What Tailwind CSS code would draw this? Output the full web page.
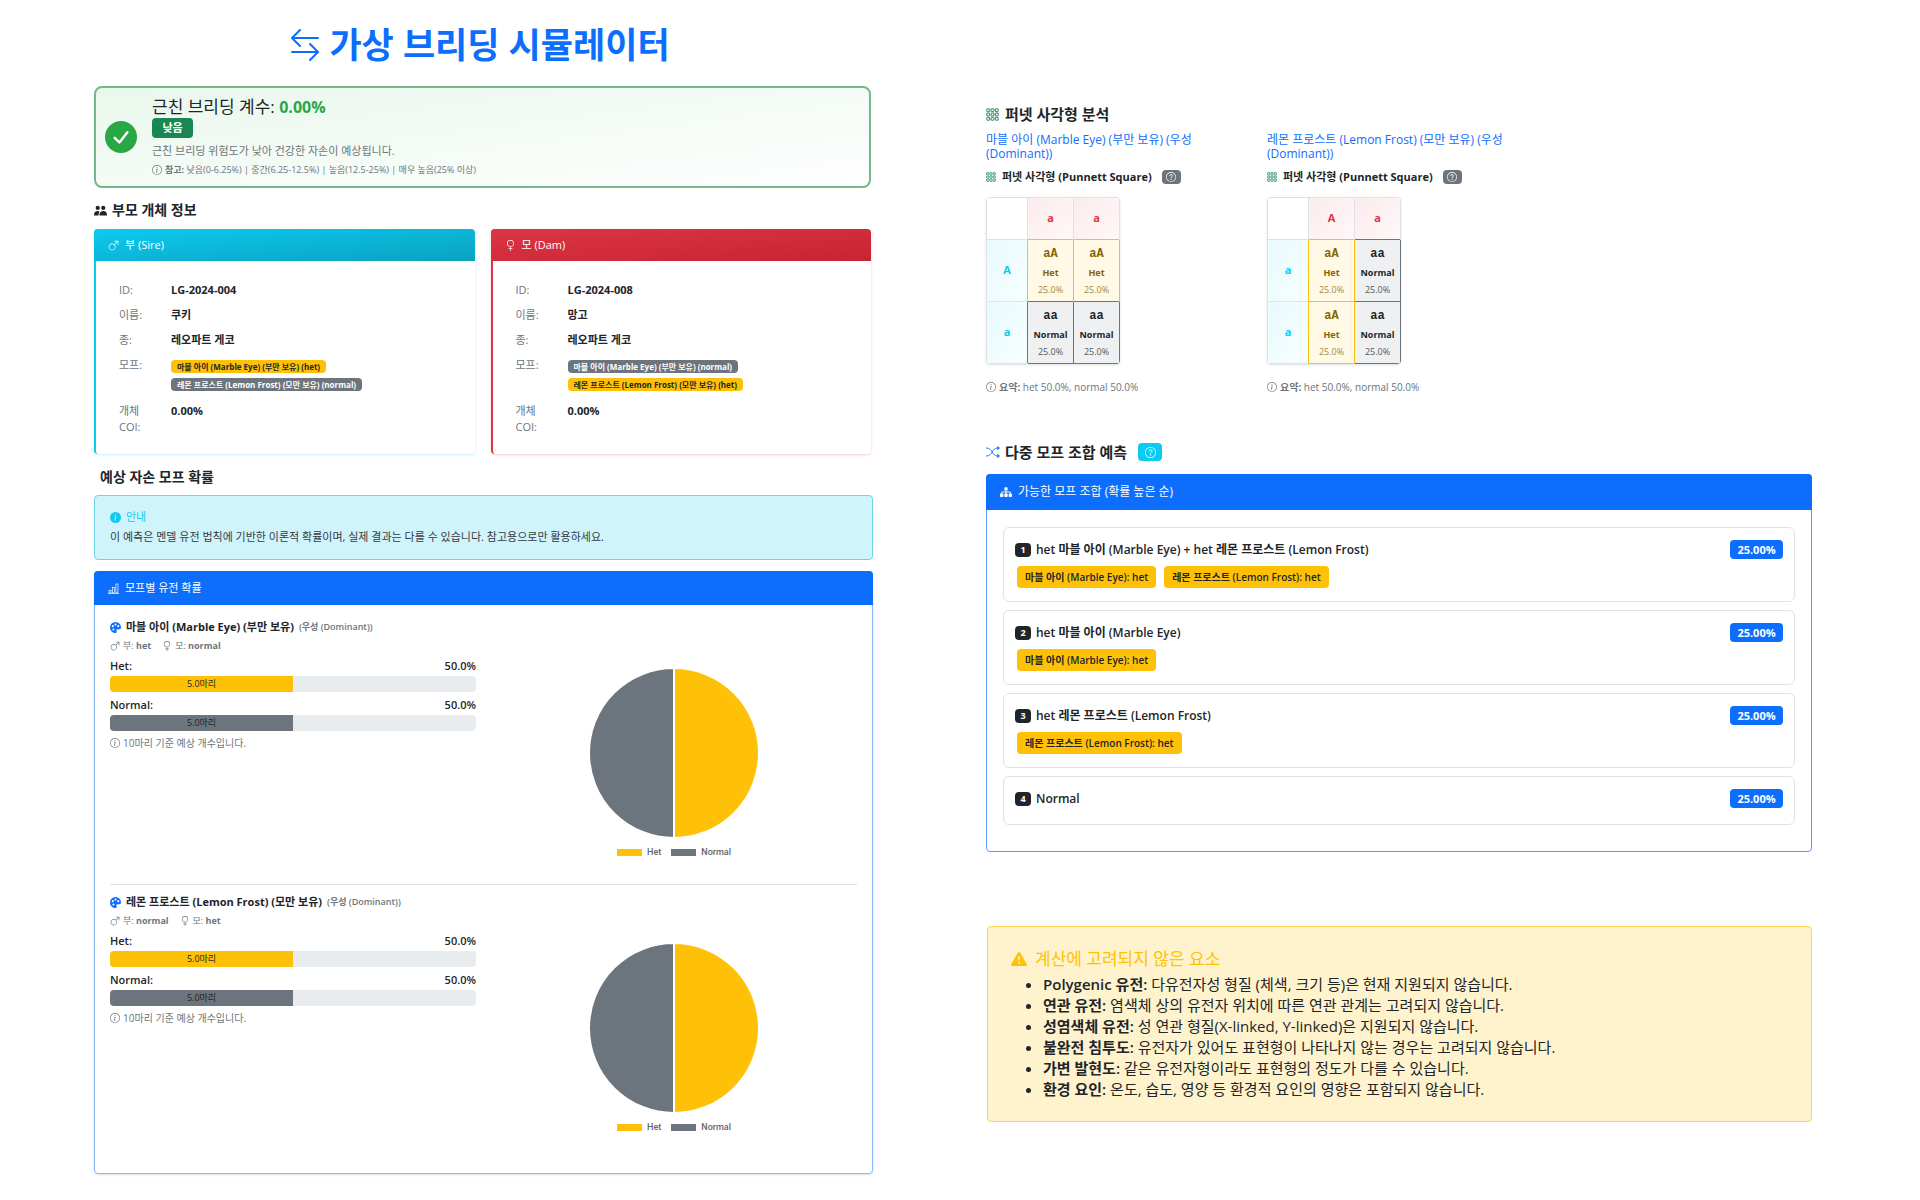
<!DOCTYPE html>
<html lang="ko">
<head>
  <meta charset="UTF-8" />
  <meta name="viewport" content="width=device-width, initial-scale=1" />
  <title>가상 브리딩 시뮬레이터</title>
  <script src="https://cdn.jsdelivr.net/npm/@tailwindcss/browser@4"></script>
  <style>
    body {
      font-family: 'Open Sans', 'Noto Sans CJK KR', sans-serif;
    }
  </style>
</head>
<body class="bg-white text-[#212529]">
  <!-- Icon set -->
  <svg class="hidden" aria-hidden="true">
    <symbol id="swap" viewBox="0 0 16 16"><path fill-rule="evenodd" d="M1 11.5a.5.5 0 0 0 .5.5h11.793l-3.147 3.146a.5.5 0 0 0 .708.708l4-4a.5.5 0 0 0 0-.708l-4-4a.5.5 0 0 0-.708.708L13.293 11H1.5a.5.5 0 0 0-.5.5m14-7a.5.5 0 0 1-.5.5H2.707l3.147 3.146a.5.5 0 1 1-.708.708l-4-4a.5.5 0 0 1 0-.708l4-4a.5.5 0 1 1 .708.708L2.707 4H14.5a.5.5 0 0 1 .5.5" /></symbol>
    <symbol id="check" viewBox="0 0 16 16"><circle cx="8" cy="8" r="8" /><path d="M4.8 8.4 7.2 10.7 11.2 5.6" fill="none" stroke="#fff" stroke-width="1.2" stroke-linecap="round" stroke-linejoin="round" /></symbol>
    <symbol id="info" viewBox="0 0 16 16"><path d="M8 15A7 7 0 1 1 8 1a7 7 0 0 1 0 14m0 1A8 8 0 1 0 8 0a8 8 0 0 0 0 16" /><path d="m8.93 6.588-2.29.287-.082.38.45.083c.294.07.352.176.288.469l-.738 3.468c-.194.897.105 1.319.808 1.319.545 0 1.178-.252 1.465-.598l.088-.416c-.2.176-.492.246-.686.246-.275 0-.375-.193-.304-.533zM9 4.5a1 1 0 1 1-2 0 1 1 0 0 1 2 0" /></symbol>
    <symbol id="info-fill" viewBox="0 0 16 16"><path d="M8 16A8 8 0 1 0 8 0a8 8 0 0 0 0 16m.93-9.412-1 4.705c-.07.34.029.533.304.533.194 0 .487-.07.686-.246l-.088.416c-.287.346-.92.598-1.465.598-.703 0-1.002-.422-.808-1.319l.738-3.468c.064-.293.006-.399-.287-.47l-.451-.081.082-.381 2.29-.287zM8 5.5a1 1 0 1 1 0-2 1 1 0 0 1 0 2" /></symbol>
    <symbol id="people" viewBox="0 0 16 16"><circle cx="4.6" cy="4.8" r="2.6" /><circle cx="11.4" cy="4.8" r="2.6" /><path d="M0 13.5C0 10.5 1.8 8.6 4.6 8.6c1 0 1.8.2 2.4.7C6 10.400 5.600 12 5.600 14H0zM6.600 14c0-3.400 1.800-5.400 4.800-5.400S16 10.600 16 13.500V14z" /></symbol>
    <symbol id="male" viewBox="0 0 16 16"><path fill-rule="evenodd" d="M9.5 2a.5.5 0 0 1 0-1h5a.5.5 0 0 1 .5.5v5a.5.5 0 0 1-1 0V2.707L9.871 6.836a5 5 0 1 1-.707-.707L13.293 2zM6 6a4 4 0 1 0 0 8 4 4 0 0 0 0-8" /></symbol>
    <symbol id="female" viewBox="0 0 16 16"><path fill-rule="evenodd" d="M8 1a4 4 0 1 0 0 8 4 4 0 0 0 0-8M3 5a5 5 0 1 1 5.5 4.975V12h2a.5.5 0 0 1 0 1h-2v2.5a.5.5 0 0 1-1 0V13h-2a.5.5 0 0 1 0-1h2V9.975A5 5 0 0 1 3 5" /></symbol>
    <symbol id="bars" viewBox="0 0 16 16"><g fill="none" stroke="currentColor"><rect x="1.500" y="10.500" width="3" height="4" /><rect x="6.500" y="6.500" width="3" height="8" /><rect x="11.500" y="1.500" width="3" height="13" /></g><path d="M0 14.500h16v1H0z" /></symbol>
    <symbol id="palette" viewBox="0 0 16 16"><path fill-rule="evenodd" d="M8 0a8 8 0 1 0 0 16c1.600 0 1.900-1 1.600-2.200-.5-2-.3-3.300 1.600-3.300 2.300 0 4.800.4 4.800-2.500A8 8 0 0 0 8 0M8 2a1.500 1.500 0 1 1 0 3 1.500 1.500 0 0 1 0-3M4 4.500a1.500 1.500 0 1 1 0 3 1.500 1.500 0 0 1 0-3m8 0a1.500 1.500 0 1 1 0 3 1.500 1.500 0 0 1 0-3M5 9.500a1.500 1.500 0 1 1 0 3 1.500 1.500 0 0 1 0-3" /></symbol>
    <symbol id="grid" viewBox="0 0 16 16"><g fill="none" stroke="currentColor" stroke-width="1.200"><rect x="1" y="1" width="3.500" height="3.500" rx=".5" /><rect x="6.250" y="1" width="3.500" height="3.500" rx=".5" /><rect x="11.500" y="1" width="3.500" height="3.500" rx=".5" /><rect x="1" y="6.250" width="3.500" height="3.500" rx=".5" /><rect x="6.250" y="6.250" width="3.500" height="3.500" rx=".5" /><rect x="11.500" y="6.250" width="3.500" height="3.500" rx=".5" /><rect x="1" y="11.500" width="3.500" height="3.500" rx=".5" /><rect x="6.250" y="11.500" width="3.500" height="3.500" rx=".5" /><rect x="11.500" y="11.500" width="3.500" height="3.500" rx=".5" /></g></symbol>
    <symbol id="question" viewBox="0 0 16 16"><path d="M8 15A7 7 0 1 1 8 1a7 7 0 0 1 0 14m0 1A8 8 0 1 0 8 0a8 8 0 0 0 0 16" /><path d="M5.900 6.200c0-1.500 1-2.200 2.200-2.200s2.200.8 2.200 2c0 1.700-2.200 1.700-2.200 3.400" fill="none" stroke="currentColor" stroke-width="1.400" /><circle cx="8.100" cy="11.500" r="1" /></symbol>
    <symbol id="shuffle" viewBox="0 0 16 16"><path d="M0 3.500h1c3 0 4.700 2.200 6 4.500s3 4.500 6 4.500h1M0 12.500h1c3 0 4.700-2.200 6-4.500s3-4.500 6-4.500h1" fill="none" stroke="currentColor" /><path d="m13 1 2.700 2.200q.3.300 0 .6L13 6zm0 9 2.700 2.200q.3.300 0 .6L13 15z" /></symbol>
    <symbol id="diagram" viewBox="0 0 16 16"><rect x="5.800" y="1.500" width="4.400" height="4.500" rx="1" /><rect x="0" y="10" width="4.500" height="4.500" rx="1" /><rect x="5.800" y="10" width="4.400" height="4.500" rx="1" /><rect x="11.500" y="10" width="4.500" height="4.500" rx="1" /><path d="M8 5.500v5M2.200 10.500V8h11.600v2.500" fill="none" stroke="currentColor" stroke-width="1.200" /></symbol>
    <symbol id="warning" viewBox="0 0 16 16"><path d="M8.982 1.566a1.130 1.130 0 0 0-1.960 0L.165 13.233c-.457.778.091 1.767.980 1.767h13.713c.889 0 1.438-.990.980-1.767zM8 5c.535 0 .954.462.900.995l-.350 3.507a.552.552 0 0 1-1.100 0L7.100 5.995A.905.905 0 0 1 8 5m.002 6a1 1 0 1 1 0 2 1 1 0 0 1 0-2" /></symbol>
  </svg>

  <main class="grid grid-cols-[779fr_826fr] gap-[113px] pl-[94px] pr-[108px] pb-6">
    <!-- Left column -->
    <div>
      <h1 class="mt-[21px] mb-[18px] flex items-center justify-center gap-2 pr-2 text-[35px] leading-[47px] font-bold text-[#0d6efd]">
        <svg class="size-8 fill-current"><use href="#swap" /></svg>가상 브리딩 시뮬레이터
      </h1>

      <section class="mr-[2px] flex items-center gap-[15px] rounded-lg border-2 border-[#75b989] bg-linear-to-br from-[#e9f7ec] to-white px-[9px] py-2">
        <svg class="size-8 shrink-0 fill-[#28a745]"><use href="#check" /></svg>
        <div>
          <p class="text-[17px] leading-[22px]">근친 브리딩 계수: <strong class="text-[16px] font-bold text-[#28a745]">0.00%</strong></p>
          <span class="block w-[41px] rounded bg-[#198754] text-center text-[11px] leading-5 font-bold text-white">낮음</span>
          <p class="mt-1 text-[11px] leading-[18px] text-[#6c757d]">근친 브리딩 위험도가 낮아 건강한 자손이 예상됩니다.</p>
          <p class="mt-[2px] flex items-center gap-[3px] text-[9px] leading-4 text-[#6c757d]">
            <svg class="size-[10px] fill-current"><use href="#info" /></svg><span><b>참고:</b> 낮음(0-6.25%) | 중간(6.25-12.5%) | 높음(12.5-25%) | 매우 높음(25% 이상)</span>
          </p>
        </div>
      </section>

      <h2 class="mt-3 mb-[9px] flex items-center gap-[5px] text-sm leading-5 font-bold">
        <svg class="size-[13px] fill-current"><use href="#people" /></svg>부모 개체 정보
      </h2>
      <div id="parents" class="mr-[2px] grid grid-cols-2 gap-4"></div>

      <h2 class="mt-[13px] mb-2 pl-[6px] text-sm leading-5 font-bold">예상 자손 모프 확률</h2>

      <section class="rounded border border-[#6fd5e6] bg-[#cff4fc] px-[15px] pt-[13px] pb-3">
        <h3 class="flex items-center gap-[5px] text-[11px] leading-4 text-[#0dcaf0]">
          <svg class="size-[11px] fill-current"><use href="#info-fill" /></svg>안내
        </h3>
        <p class="mt-[2px] text-[11px] leading-5 text-[#343a40]">이 예측은 멘델 유전 법칙에 기반한 이론적 확률이며, 실제 결과는 다를 수 있습니다. 참고용으로만 활용하세요.</p>
      </section>

      <section class="mt-[11px] rounded border border-[#8ab8f8] shadow-sm">
        <h3 class="-mx-px -mt-px flex items-center gap-[6px] rounded-t bg-[#0d6efd] px-[14px] text-[11px] leading-[34px] text-white">
          <svg class="size-[11px] fill-current"><use href="#bars" /></svg>모프별 유전 확률
        </h3>
        <div id="morphs" class="divide-y divide-[#dee2e6] px-[15px] pt-[5px] pb-[14px]"></div>
      </section>
    </div>

    <!-- Right column -->
    <div class="pt-[103px]">
      <h2 class="flex items-center gap-[6px] text-[15px] leading-[22px] font-bold">
        <svg class="size-[13px] text-[#198754]"><use href="#grid" /></svg>퍼넷 사각형 분석
      </h2>
      <div id="punnett" class="mt-2 grid grid-cols-[221px_240px] gap-[60px]"></div>

      <h2 class="mt-[46px] mb-[11px] flex items-center gap-[5px] text-[15px] leading-[22px] font-bold">
        <svg class="size-[14px] fill-[#0d6efd] text-[#0d6efd]"><use href="#shuffle" /></svg>다중 모프 조합 예측
        <button type="button" aria-label="도움말" class="ml-[6px] flex h-[18px] w-6 items-center justify-center rounded bg-[#0dcaf0] text-white">
          <svg class="size-[11px] fill-current"><use href="#question" /></svg>
        </button>
      </h2>
      <section class="rounded border border-[#5b9bfd]">
        <h3 class="-mx-px -mt-px flex items-center gap-[6px] rounded-t bg-[#0d6efd] px-[14px] text-[12px] leading-9 text-white">
          <svg class="size-[12px] fill-current"><use href="#diagram" /></svg>가능한 모프 조합 (확률 높은 순)
        </h3>
        <ol id="combos" class="flex flex-col gap-2 px-4 pt-[17px] pb-[26px]"></ol>
      </section>

      <section class="mt-[74px] ml-px rounded border border-[#ffd34e] bg-[#fff3cd] px-[23px] pt-5 pb-[21px]">
        <h3 class="flex items-center gap-[8px] text-[17px] leading-6 text-[#ffc107]">
          <svg class="size-4 fill-current"><use href="#warning" /></svg>계산에 고려되지 않은 요소
        </h3>
        <ul class="mt-[3px] list-disc pl-8 text-[15px] leading-[21px]">
          <li><b class="font-semibold">Polygenic 유전:</b> 다유전자성 형질 (체색, 크기 등)은 현재 지원되지 않습니다.</li>
          <li><b class="font-semibold">연관 유전:</b> 염색체 상의 유전자 위치에 따른 연관 관계는 고려되지 않습니다.</li>
          <li><b class="font-semibold">성염색체 유전:</b> 성 연관 형질(X-linked, Y-linked)은 지원되지 않습니다.</li>
          <li><b class="font-semibold">불완전 침투도:</b> 유전자가 있어도 표현형이 나타나지 않는 경우는 고려되지 않습니다.</li>
          <li><b class="font-semibold">가변 발현도:</b> 같은 유전자형이라도 표현형의 정도가 다를 수 있습니다.</li>
          <li><b class="font-semibold">환경 요인:</b> 온도, 습도, 영양 등 환경적 요인의 영향은 포함되지 않습니다.</li>
        </ul>
      </section>
    </div>
  </main>

  <script>
    const marble = '마블 아이 (Marble Eye)';
    const lemon = '레몬 프로스트 (Lemon Frost)';
    const badgeColors = {
      het: 'bg-[#ffc107] text-[#212529]',
      normal: 'bg-[#6c757d] text-white'
    };

    const parents = [
      { title: '부 (Sire)', icon: 'male', id: 'LG-2024-004', name: '쿠키', types: ['het', 'normal'],
        border: 'border-[#0dcaf0] shadow-[#0dcaf0]/20', head: 'from-[#0dcaf0] to-[#0aa2c0]' },
      { title: '모 (Dam)', icon: 'female', id: 'LG-2024-008', name: '망고', types: ['normal', 'het'],
        border: 'border-[#dc3545] shadow-[#dc3545]/20', head: 'from-[#dc3545] to-[#c82333]' }
    ];

    document.getElementById('parents').innerHTML = parents.map(p => `
      <article class="rounded border-l-2 bg-white shadow ${p.border}">
        <h3 class="-ml-[2px] flex items-center gap-[6px] rounded-t bg-linear-to-br ${p.head} px-[14px] text-[11px] leading-8 text-white">
          <svg class="size-[11px] fill-current"><use href="#${p.icon}" /></svg>${p.title}
        </h3>
        <dl class="grid grid-cols-[40px_1fr] gap-x-3 gap-y-[9px] px-[23px] pt-[21px] pb-[19px] text-[11px] leading-4">
          <dt class="text-[#6c757d]">ID:</dt><dd class="font-bold">${p.id}</dd>
          <dt class="text-[#6c757d]">이름:</dt><dd class="font-bold">${p.name}</dd>
          <dt class="text-[#6c757d]">종:</dt><dd class="font-bold">레오파트 게코</dd>
          <dt class="text-[#6c757d]">모프:</dt>
          <dd class="flex flex-col items-start gap-[5px] pt-[3px] pb-[3px] text-[8px] leading-[13px] font-bold">
            <span class="rounded px-[6px] ${badgeColors[p.types[0]]}">${marble} (부만 보유) (${p.types[0]})</span>
            <span class="rounded px-[6px] ${badgeColors[p.types[1]]}">${lemon} (모만 보유) (${p.types[1]})</span>
          </dd>
          <dt class="text-[#6c757d]">개체 COI:</dt><dd class="font-bold">0.00%</dd>
        </dl>
      </article>
    `).join('');

    const morphs = [
      { name: `${marble} (부만 보유)`, sire: 'het', dam: 'normal' },
      { name: `${lemon} (모만 보유)`, sire: 'normal', dam: 'het' }
    ];
    const outcomes = [
      { label: 'Het', percent: 50, color: 'bg-[#ffc107]' },
      { label: 'Normal', percent: 50, color: 'bg-[#6c757d]' }
    ];

    document.getElementById('morphs').innerHTML = morphs.map(m => `
      <article class="pt-2">
        <h4 class="flex items-center gap-[5px] text-[11px] leading-[18px] font-bold">
          <svg class="size-[11px] fill-[#0d6efd]"><use href="#palette" /></svg>${m.name}
          <span class="text-[9px] font-semibold text-[#6c757d]">(우성 (Dominant))</span>
        </h4>
        <p class="mt-[2px] flex items-center gap-[3px] text-[9px] leading-4 text-[#6c757d]">
          <svg class="size-[10px] fill-current"><use href="#male" /></svg><span>부: <b>${m.sire}</b></span>
          <svg class="ml-2 size-[10px] fill-current"><use href="#female" /></svg><span>모: <b>${m.dam}</b></span>
        </p>
        <div class="mt-1 grid grid-cols-2 gap-[15px]">
          <div>
            ${outcomes.map(o => `
              <div class="mb-[5px]">
                <div class="mb-[2px] flex justify-between text-[11px] leading-4 font-semibold"><span>${o.label}:</span><span>${o.percent.toFixed(1)}%</span></div>
                <div class="h-4 overflow-hidden rounded bg-[#e9ecef]">
                  <div class="h-4 text-center text-[9px] leading-4 ${o.color}" style="width: ${o.percent}%">5.0마리</div>
                </div>
              </div>
            `).join('')}
            <p class="-mt-px flex items-center gap-[3px] text-[10px] leading-4 text-[#6c757d]">
              <svg class="size-[10px] fill-current"><use href="#info" /></svg>10마리 기준 예상 개수입니다.
            </p>
          </div>
          <div class="flex flex-col items-center pt-[10px] pb-6">
            <svg class="size-[170px]" viewBox="0 0 170 170" stroke="#fff" stroke-width="2">
              <path d="M85 0a85 85 0 0 1 0 170z" fill="#ffc107" />
              <path d="M85 170a85 85 0 0 1 0-170z" fill="#6c757d" />
            </svg>
            <ul class="mt-[6px] flex gap-[10px] font-['Roboto'] text-[9px] leading-4 font-medium text-[#666]">
              ${outcomes.map(o => `<li class="flex items-center gap-[5px]"><span class="h-[7px] w-[25px] ${o.color}"></span>${o.label}</li>`).join('')}
            </ul>
          </div>
        </div>
      </article>
    `).join('');

    const squares = [
      { name: `${marble} (부만 보유)`, dam: ['a', 'a'], sire: ['A', 'a'], cells: [['het', 'het'], ['normal', 'normal']] },
      { name: `${lemon} (모만 보유)`, dam: ['A', 'a'], sire: ['a', 'a'], cells: [['het', 'normal'], ['het', 'normal']] }
    ];
    const cellColors = {
      het: 'border-[#ffc107] bg-[#fff9e6] text-[#856404]',
      normal: 'border-[#6c757d] bg-[#eff0f1] text-[#212529]'
    };

    function renderCell(type) {
      return `
        <td class="border-x border-t group-last:border-b p-0 text-center ${cellColors[type]}">
          <div class="font-['Liberation_Mono'] text-[12px] leading-5 font-bold">${type === 'het' ? 'aA' : 'aa'}</div>
          <div class="text-[9px] leading-[18px] font-bold">${type === 'het' ? 'Het' : 'Normal'}</div>
          <div class="text-[9px] leading-4 opacity-75">25.0%</div>
        </td>
      `;
    }

    document.getElementById('punnett').innerHTML = squares.map(s => `
      <article>
        <h3 class="text-[12px] leading-[14px] text-[#0d6efd]">${s.name} (우성 (Dominant))</h3>
        <h4 class="mt-2 flex items-center gap-[6px] text-[11px] leading-4 font-bold">
          <svg class="size-[10px] text-[#198754]"><use href="#grid" /></svg>퍼넷 사각형 (Punnett Square)
          <button type="button" aria-label="도움말" class="ml-1 flex h-[14px] w-[19px] items-center justify-center rounded bg-[#6c757d] text-white">
            <svg class="size-[10px] fill-current"><use href="#question" /></svg>
          </button>
        </h4>
        <div class="mt-3 w-[134px] overflow-hidden rounded shadow">
          <table class="w-full table-fixed border-collapse">
            <colgroup><col class="w-[41px]" /><col /><col /></colgroup>
            <tr class="h-[42px]">
              <td class="border-t border-l border-[#dee2e6]"></td>
              ${s.dam.map(g => `<th scope="col" class="border-t border-l last:border-r border-[#dee2e6] bg-linear-to-br from-[#fbebed] to-[#fff8f8] text-[11px] text-[#dc3545]">${g}</th>`).join('')}
            </tr>
            ${s.cells.map((row, i) => `
              <tr class="group h-[62px]">
                <th scope="row" class="border-t border-l group-last:border-b border-[#dee2e6] bg-linear-to-br from-[#e7fafe] to-[#f8feff] text-[11px] text-[#0dcaf0]">${s.sire[i]}</th>
                ${row.map(renderCell).join('')}
              </tr>
            `).join('')}
          </table>
        </div>
        <p class="mt-[15px] flex items-center gap-[3px] text-[10px] leading-4 text-[#6c757d]">
          <svg class="size-[10px] fill-current"><use href="#info" /></svg><span><b>요약:</b> het 50.0%, normal 50.0%</span>
        </p>
      </article>
    `).join('');

    const combos = [
      { title: `het ${marble} + het ${lemon}`, tags: [marble, lemon] },
      { title: `het ${marble}`, tags: [marble] },
      { title: `het ${lemon}`, tags: [lemon] },
      { title: 'Normal', tags: [] }
    ];

    document.getElementById('combos').innerHTML = combos.map((c, i) => `
      <li class="flex items-start justify-between rounded-md border border-[#dee2e6] px-[11px] pt-3 pb-[13px]">
        <div>
          <h4 class="flex items-center gap-[5px] text-[12px] leading-5 font-semibold">
            <span class="w-4 rounded bg-[#212529] text-center text-[9px] leading-[14px] font-bold text-white">${i + 1}</span>${c.title}
          </h4>
          <div class="mt-[2px] flex gap-2 pl-[2px]">
            ${c.tags.map(t => `<span class="mt-1 rounded bg-[#ffc107] px-2 text-[10px] leading-[22px] font-semibold">${t}: het</span>`).join('')}
          </div>
        </div>
        <span class="w-[53px] rounded bg-[#0d6efd] text-center text-[11px] leading-[19px] font-bold text-white">25.00%</span>
      </li>
    `).join('');
  </script>
</body>
</html>
